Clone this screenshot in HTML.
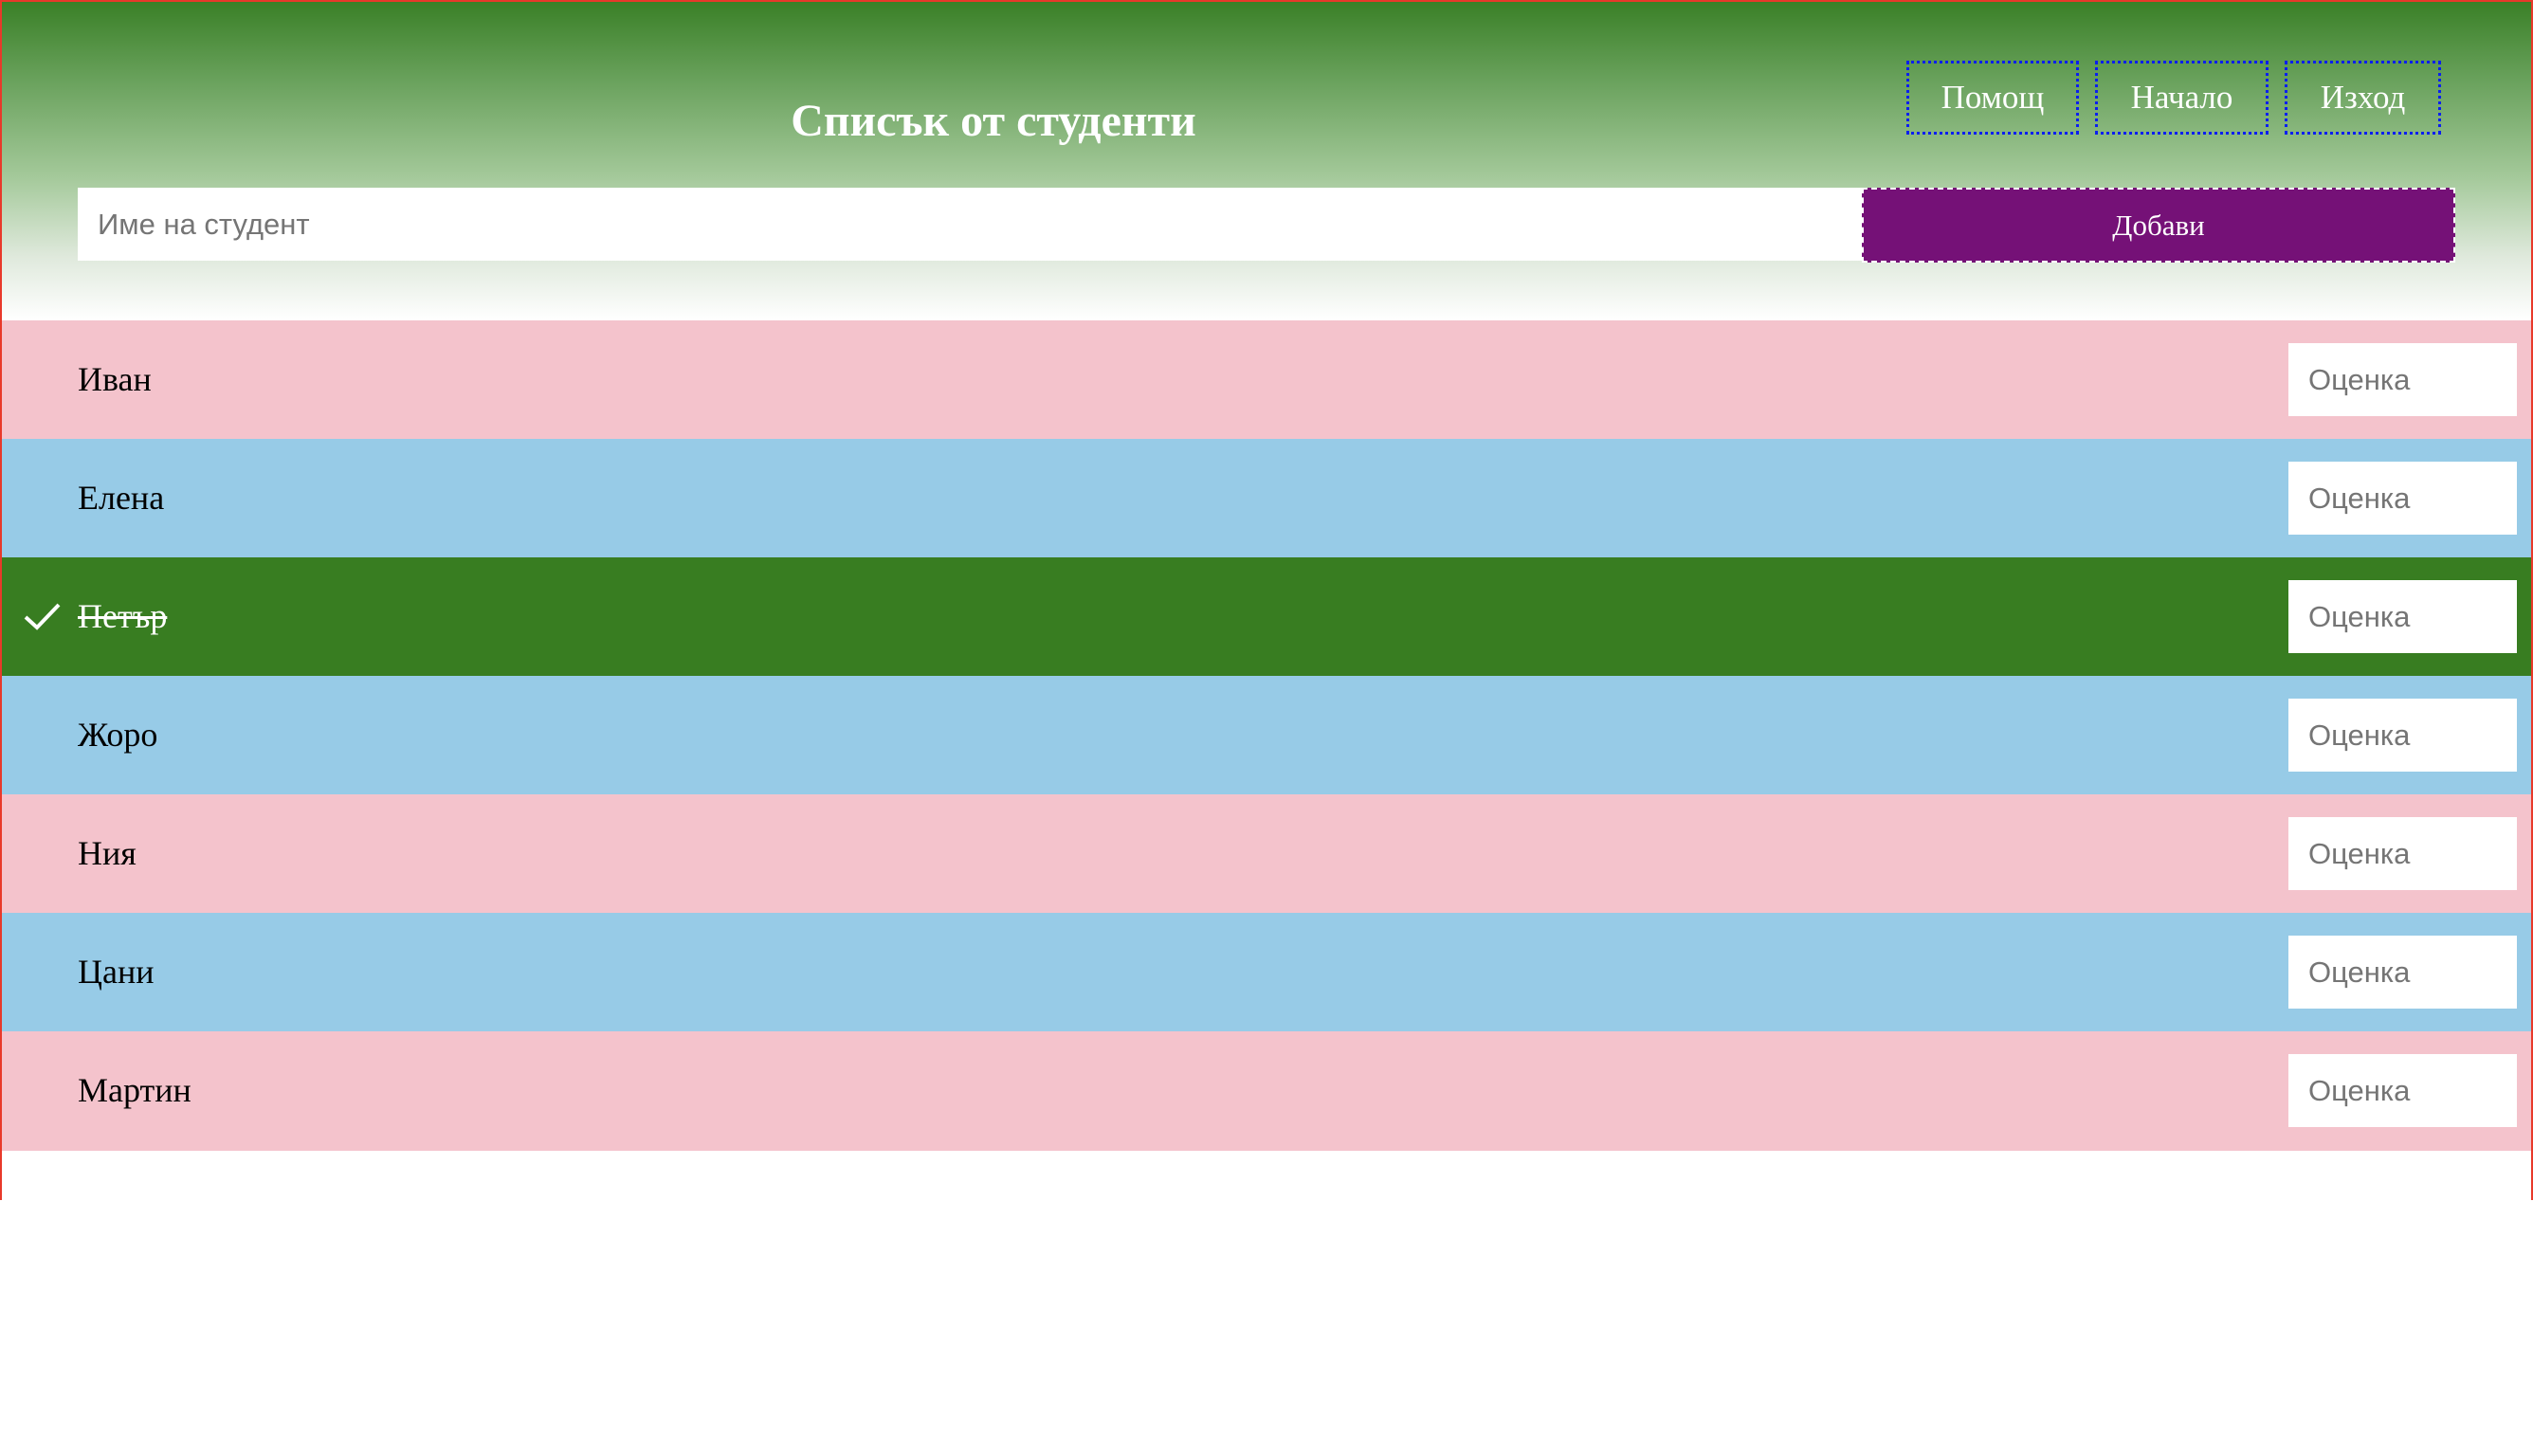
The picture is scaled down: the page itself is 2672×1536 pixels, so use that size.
<!DOCTYPE html>
<html><head><meta charset="utf-8"><style>
*{box-sizing:border-box;margin:0;padding:0}
body{width:2672px;height:1536px;background:#fff;position:relative;overflow:hidden;font-family:"Liberation Serif",serif}
#wrap{position:absolute;left:0;top:0;width:2672px;height:1266px;border:2px solid #e8392a;border-bottom:none}
#hdr{position:absolute;left:0;top:0;width:2668px;height:336px;background:linear-gradient(#3a8027 0%,#6aa25d 25%,#a4c99a 55%,#dfe9dc 80%,#fff 100%)}
h1{position:absolute;left:0;width:2092px;text-align:center;top:98px;font-size:48px;color:#fff;font-weight:bold}
.nav{position:absolute;top:62px;height:78px;border:3px dotted #0a1ef0;color:#fff;font-size:35px;text-align:center;line-height:72px}
#inp{position:absolute;left:80px;top:196px;width:1883px;height:77px;background:#fff;font-family:"Liberation Sans",sans-serif;font-size:31px;color:#757575;padding-left:21px;line-height:77px}
#add{position:absolute;left:1962px;top:196px;width:626px;height:79px;background:#751177;border:2px dashed #fff;color:#fff;font-size:31px;text-align:center;line-height:75px}
.row{position:absolute;left:0;width:2668px;height:125px}
.row span{position:absolute;left:80px;top:0;line-height:125px;font-size:36px;color:#000}
.g{position:absolute;left:2412px;top:24px;width:241px;height:77px;background:#fff;font-family:"Liberation Sans",sans-serif;font-size:31px;color:#757575;padding-left:21px;line-height:77px}
.p{background:#f4c3cc}.b{background:#97cbe7}
</style></head><body>
<div id="wrap">
<div id="hdr">
<h1>Списък от студенти</h1>
<div class="nav" style="left:2009px;width:182px">Помощ</div>
<div class="nav" style="left:2208px;width:183px">Начало</div>
<div class="nav" style="left:2408px;width:165px">Изход</div>
<div id="inp">Име на студент</div>
<div id="add">Добави</div>
</div>
<div class="row p" style="top:336px"><span>Иван</span><div class="g">Оценка</div></div>
<div class="row b" style="top:461px"><span>Елена</span><div class="g">Оценка</div></div>
<div class="row" style="top:586px;background:#387d21"><svg style="position:absolute;left:20px;top:45px" width="46" height="36"><path d="M5 18 L17 29 L40 5" stroke="#fff" stroke-width="4" fill="none"/></svg><span style="color:#fff;text-decoration:line-through">Петър</span><div class="g">Оценка</div></div>
<div class="row b" style="top:711px"><span>Жоро</span><div class="g">Оценка</div></div>
<div class="row p" style="top:836px"><span>Ния</span><div class="g">Оценка</div></div>
<div class="row b" style="top:961px"><span>Цани</span><div class="g">Оценка</div></div>
<div class="row p" style="top:1086px;height:126px"><span>Мартин</span><div class="g">Оценка</div></div>
</div>
</body></html>
